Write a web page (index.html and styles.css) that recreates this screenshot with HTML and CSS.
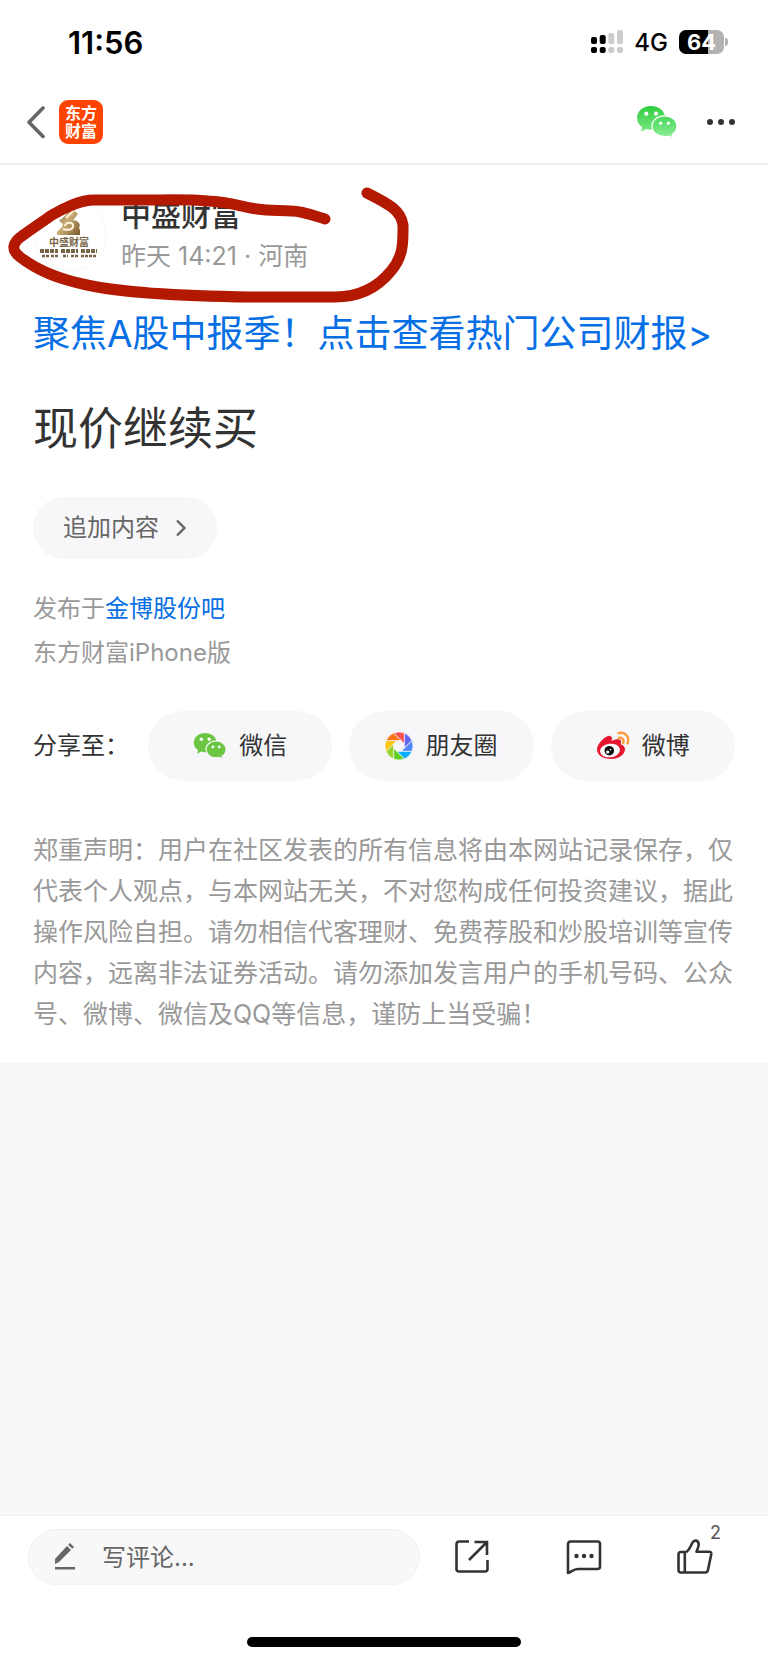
FILE: index.html
```html
<!DOCTYPE html>
<html lang="zh-CN">
<head>
<meta charset="utf-8">
<meta name="viewport" content="width=device-width, initial-scale=1">
<title>现价继续买</title>
<link rel="stylesheet" href="styles.css">
</head>
<body>
<div class="page">
  <div class="status">
    <time class="clock">11:56</time>
    <div class="status-right">
      <svg width="32" height="24" viewBox="0 0 32 24" aria-hidden="true">
        <g fill="#000"><rect x="0" y="7" width="6" height="7" rx="2"/><rect x="8.700" y="5" width="6" height="9" rx="2"/><rect x="0" y="17" width="6" height="6" rx="2"/><rect x="8.700" y="17" width="6" height="6" rx="2"/></g>
        <g fill="#ccc"><rect x="17.300" y="3" width="6" height="11" rx="2"/><rect x="26" y="0" width="6" height="14" rx="2"/><rect x="17.300" y="17" width="6" height="6" rx="2"/><rect x="26" y="17" width="6" height="6" rx="2"/></g>
      </svg>
      <span class="network">4G</span>
      <span class="battery"><span class="battery-level">64</span></span>
    </div>
  </div>

  <header class="nav">
    <button class="icon-btn back" aria-label="返回">
      <svg width="20" height="34" viewBox="0 0 20 34" fill="none" stroke="#666" stroke-width="3.600" stroke-linecap="round" stroke-linejoin="round"><path d="M17 3L3 17.200L17 31.500"/></svg>
    </button>
    <a class="logo" href="#"><span>东方</span><span>财富</span></a>
    <button class="icon-btn wechat" aria-label="分享到微信">
      <svg width="42" height="34" viewBox="0 0 42 34">
        <defs><linearGradient id="wx" x1="0" y1="0" x2="0" y2="34" gradientUnits="userSpaceOnUse"><stop offset="0" stop-color="#2bcb3b"/><stop offset="1" stop-color="#8ff09a"/></linearGradient></defs>
        <path fill="url(#wx)" d="M15 1C7 1 1 6.300 1 13c0 4 2 7 5.200 9.200L5 26.500l5.200-2.600c1.600.5 3.300.7 5 .7 8 0 14-5.200 14-11.700S23 1 15 1z"/>
        <path fill="url(#wx)" stroke="#fff" stroke-width="1.200" d="M28.500 10.800c-7 0-12.500 4.600-12.500 10.400s5.500 10.400 12.500 10.400c1.600 0 3.100-.2 4.500-.6l4.200 2.300-1.100-3.800c3-2 4.800-4.900 4.800-8.300 0-5.800-5.400-10.400-12.400-10.400z"/>
        <g fill="#fff"><circle cx="10.300" cy="8.700" r="2.100"/><circle cx="20" cy="8.700" r="2.100"/><circle cx="24.600" cy="18.200" r="1.600"/><circle cx="32.400" cy="18.200" r="1.600"/></g>
      </svg>
    </button>
    <button class="icon-btn" aria-label="更多">
      <svg width="30" height="8" viewBox="0 0 30 8" fill="#333"><circle cx="4" cy="4" r="3"/><circle cx="15" cy="4" r="3"/><circle cx="26" cy="4" r="3"/></svg>
    </button>
  </header>

  <main class="post">
    <section class="author">
      <svg class="avatar" width="74" height="74" viewBox="0 0 74 74" role="img" aria-label="头像">
        <defs><linearGradient id="gold" x1="0" y1="0" x2="1" y2="1"><stop offset="0" stop-color="#6e5020"/><stop offset=".5" stop-color="#c9ac78"/><stop offset="1" stop-color="#7b5b2b"/></linearGradient></defs>
        <circle cx="37" cy="37" r="36" fill="#fff" stroke="#f7f7f7"/>
        <path d="M26 10c8-7 18-7 20 0l-5 2 4 4-5 6c6 1 8 4 6 8l1 2v5H24v-3l4-4c2-2 2-3 1-5l-3-2 8-7-4-3-6 3z" fill="url(#gold)"/>
        <path d="M30 31c6 2 11 0 10-4s-8-2-8 1M41 12l-8 8M30 12l7-3" fill="none" stroke="#fff2d8" stroke-width="2"/>
        <text class="avatar-name" x="36" y="48" text-anchor="middle">中盛财富</text>
        <g fill="none" stroke="#786547"><path d="M7 53h18M28 53h17M48 53h16" stroke-width="4" stroke-dasharray="4 1"/><path d="M9 58h7M18 58h8M30 58h5M38 58h7M48 58h15" stroke-width="2.500" stroke-dasharray="3 1"/></g>
      </svg>
      <div class="author-text">
        <strong class="author-name">中盛财富</strong>
        <span class="meta">昨天 14:21 · 河南</span>
      </div>
      <svg class="scribble" width="420" height="120" viewBox="0 0 420 120" fill="none" stroke="#b31900" stroke-width="11" stroke-linecap="round" stroke-linejoin="round" aria-hidden="true">
        <path d="M325 32C312 28 301 24 292 24C279 23 270 24 257 22C239 19 229 15 208 14C187 12 165 13 146 13H94C80 13 66 20 52 28C42 35 30 43 22 49C12 56 11 63 20 70C38 84 58 92 87 98C119 105 176 109 251 110H335C360 110 378 100 391 84C404 69 403 54 403 38C401 24 391 18 367 6"/>
      </svg>
    </section>

    <a class="promo" href="#">聚焦A股中报季！点击查看热门公司财报&gt;</a>
    <h1 class="title">现价继续买</h1>
    <button class="append">追加内容
      <svg width="12" height="18" viewBox="0 0 12 18" fill="none" stroke="#666" stroke-width="2.400"><path d="M2 1.500L9.500 9L2 16.500"/></svg>
    </button>
    <div class="source">
      <p>发布于<a href="#">金博股份吧</a></p>
      <p>东方财富iPhone版</p>
    </div>

    <section class="share">
      <span class="share-label">分享至：</span>
      <button class="share-btn">
        <svg width="34" height="30" viewBox="0 0 42 34" fill="#6cc644">
          <path d="M15 1C7 1 1 6.300 1 13c0 4 2 7 5.200 9.200L5 26.500l5.200-2.600c1.600.5 3.300.7 5 .7 8 0 14-5.200 14-11.700S23 1 15 1z"/>
          <path stroke="#f7f7fa" stroke-width="1.500" d="M28.500 10.800c-7 0-12.500 4.600-12.500 10.400s5.500 10.400 12.500 10.400c1.600 0 3.100-.2 4.500-.6l4.200 2.300-1.100-3.800c3-2 4.800-4.900 4.800-8.300 0-5.800-5.400-10.400-12.400-10.400z"/>
          <g fill="#fff"><circle cx="10.300" cy="8.700" r="2.100"/><circle cx="20" cy="8.700" r="2.100"/><circle cx="24.600" cy="18.200" r="1.700"/><circle cx="32.400" cy="18.200" r="1.700"/></g>
        </svg>
        微信
      </button>
      <button class="share-btn">
        <svg width="28" height="28" viewBox="-14 -14 28 28" stroke="#f7f7fa" stroke-width=".7">
          <path fill="#fa5452" d="M-5.400-12.900A14 14 0 0 1 5.400-12.900V-2.200z"/>
          <path fill="#6468f0" d="M5.400-12.900A14 14 0 0 1 12.900-5.400L5.400 2.200z"/>
          <path fill="#5087f5" d="M12.900-5.400A14 14 0 0 1 12.900 5.400H2.200z"/>
          <path fill="#07adff" d="M12.900 5.400A14 14 0 0 1 5.400 12.900L-2.200 5.400z"/>
          <path fill="#60d020" d="M5.400 12.900A14 14 0 0 1-5.400 12.900V2.200z"/>
          <path fill="#97d327" d="M-5.400 12.900A14 14 0 0 1-12.900 5.400L-5.400-2.200z"/>
          <path fill="#fdc60a" d="M-12.900 5.400A14 14 0 0 1-12.900-5.400H-2.200z"/>
          <path fill="#ff7414" d="M-12.900-5.400A14 14 0 0 1-5.400-12.900L2.200-5.400z"/>
        </svg>
        朋友圈
      </button>
      <button class="share-btn">
        <svg width="34" height="30" viewBox="0 0 34 30">
          <path fill="#e6162d" d="M14 5c3 1 2 3 1.500 5 4-2 9-2.500 9.500 0 .4 1.500-.5 2.500-.2 3.200 2 .8 4.200 2.300 4.200 5 0 5-6 9.800-14 9.800S1 24 1 18.500C1 13 10 3.500 14 5z"/>
          <ellipse cx="14" cy="19.500" rx="10" ry="6.800" fill="#fff" transform="rotate(-7 14 19.500)"/>
          <circle cx="13.300" cy="19.700" r="4.800" fill="#111"/><circle cx="11.700" cy="21" r="1.600" fill="#fff"/><circle cx="14.500" cy="18.700" r=".8" fill="#fff"/>
          <path d="M22.500 2.200C29 0 34 6 31.500 12.500M22.800 7C26 6 28.500 9 27.200 12" fill="none" stroke="#ff9a35" stroke-width="2.400" stroke-linecap="round"/>
        </svg>
        微博
      </button>
    </section>

    <p class="notice">郑重声明：用户在社区发表的所有信息将由本网站记录保存，仅代表个人观点，与本网站无关，不对您构成任何投资建议，据此操作风险自担。请勿相信代客理财、免费荐股和炒股培训等宣传内容，远离非法证券活动。请勿添加发言用户的手机号码、公众号、微博、微信及QQ等信息，谨防上当受骗！</p>
  </main>

  <footer class="toolbar">
    <div class="actions">
      <label class="comment">
        <svg width="22" height="30" viewBox="0 0 22 30" fill="#666" aria-label="写评论"><path d="M1 17L13 4l4 4L5 20l-4 2z"/><path d="M14.200 2.800l1.800-1.800 4 4-1.800 1.800z"/><rect x="1" y="25" width="20" height="2.500"/></svg>
        <input type="text" placeholder="写评论...">
      </label>
      <div class="tools">
        <button class="icon-btn" aria-label="转发">
          <svg width="36" height="36" viewBox="0 0 36 36" fill="none" stroke="#333" stroke-width="2.600"><path d="M15 2.500H5a2.500 2.500 0 0 0-2.500 2.500v25A2.500 2.500 0 0 0 5 32.500h26a2.500 2.500 0 0 0 2.500-2.500V21M20.500 3h12.500v13M32.500 3.500L15 21"/></svg>
        </button>
        <button class="icon-btn" aria-label="评论">
          <svg width="36" height="36" viewBox="0 0 36 36" fill="none" stroke="#333" stroke-width="2.600" stroke-linejoin="round"><path d="M2 34V5a2.500 2.500 0 0 1 2.500-2.500h27A2.500 2.500 0 0 1 34 5v22.500a2.500 2.500 0 0 1-2.500 2.500H12C7 30 5 33.500 2 34z"/><g fill="#333" stroke="none"><circle cx="10.500" cy="17" r="2.200"/><circle cx="18" cy="17" r="2.200"/><circle cx="25.500" cy="17" r="2.200"/></g></svg>
        </button>
        <button class="icon-btn like" aria-label="点赞 2">
          <svg width="36" height="36" viewBox="0 0 36 36" fill="none" stroke="#333" stroke-width="2.600" stroke-linejoin="round"><path d="M9.500 13H4A2.500 2.500 0 0 0 1.500 15.500v15.500A2.500 2.500 0 0 0 4 33.500h24a3 3 0 0 0 2.900-2.300L34.300 15a2 2 0 0 0-2-2.300H19.500C21 9 22.300 6.500 21.500 4c-.8-3-4.500-3.300-6-.3C13.500 7 13 10 9.500 13M7.800 13v20"/></svg>
          <span class="badge">2</span>
        </button>
      </div>
    </div>
    <div class="home-indicator"></div>
  </footer>
</div>
</body>
</html>
```

FILE: styles.css
```css
* { box-sizing: border-box; }

body {
  margin: 0;
  font-family: Inter, "Noto Sans CJK SC", sans-serif;
  font-size: 24px;
  color: #333;
  background: #f7f8fa;
}

button, input { font: inherit; color: inherit; border: 0; padding: 0; background: none; }
button { line-height: 28px; }
a { color: #076fe5; text-decoration: none; }
p, h1 { margin: 0; }
svg { display: block; flex: none; }

.page { min-height: 100vh; display: flex; flex-direction: column; }

.status {
  display: flex;
  align-items: center;
  justify-content: space-between;
  height: 84px;
  padding: 0 40px 0 68px;
  background: #fff;
  color: #000;
}
.clock { font-size: 31px; font-weight: 600; }
.status-right { display: flex; align-items: center; gap: 11px; }
.network { font-size: 24px; font-weight: 500; }
.battery {
  position: relative;
  width: 45px;
  height: 24px;
  margin-right: 4px;
  border-radius: 7px;
  background: linear-gradient(90deg, #000 64%, #b2b2b2 64%);
}
.battery::after {
  content: "";
  position: absolute;
  right: -4px;
  top: 8px;
  width: 3px;
  height: 8px;
  border-radius: 0 3px 3px 0;
  background: #b2b2b2;
}
.battery-level { display: block; text-align: center; font-size: 22px; line-height: 24px; font-weight: 700; color: #fff; }

.nav {
  display: flex;
  align-items: center;
  height: 81px;
  padding: 0 32px 3px 26px;
  background: #fff;
  border-bottom: 2px solid #ececec;
}
.icon-btn { display: flex; cursor: pointer; }
.logo {
  display: flex;
  flex-direction: column;
  align-items: center;
  justify-content: center;
  width: 44px;
  height: 44px;
  margin-left: 13px;
  border-radius: 9px;
  background: #ff4400;
  color: #fff;
  font-size: 16px;
  line-height: 18px;
  font-weight: 700;
}
.wechat { margin-left: auto; margin-right: 28px; }

.post { padding: 30px 33px 28px; background: #fff; }

.author { position: relative; display: flex; align-items: center; height: 80px; gap: 14px; }
.author-text { display: flex; flex-direction: column; }
.author-name { font-size: 30px; line-height: 42px; font-weight: 500; }
.meta { font-size: 25px; line-height: 40px; color: #999; }
.avatar-name { font-size: 10px; font-weight: 700; fill: #786547; }
.scribble { position: absolute; left: -33px; top: -8px; }

.promo { display: block; margin-top: 33px; font-size: 37px; line-height: 52px; white-space: nowrap; }
.title { margin-top: 37px; font-size: 45px; line-height: 64px; font-weight: 400; }

.append {
  display: flex;
  align-items: center;
  gap: 16px;
  height: 62px;
  margin-top: 36px;
  padding: 0 30px;
  border-radius: 31px;
  background: #f7f7fa;
  color: #666;
}

.source { margin-top: 28px; line-height: 44px; color: #999; }

.share { display: flex; align-items: center; gap: 17px; margin-top: 36px; }
.share-label { width: 98px; line-height: 28px; white-space: nowrap; }
.share-btn {
  flex: 1;
  display: flex;
  align-items: center;
  justify-content: center;
  gap: 12px;
  height: 70px;
  border-radius: 35px;
  background: #f7f7fa;
}

.notice { margin-top: 49px; font-size: 25px; line-height: 41px; color: #999; }

.toolbar { margin-top: auto; padding: 13px 28px 16px; background: #fff; border-top: 1px solid #f0f0f0; }
.actions { display: grid; grid-template-columns: 392fr 320fr; align-items: center; }
.comment {
  min-width: 0;
  display: flex;
  align-items: center;
  gap: 26px;
  height: 56px;
  padding: 0 25px;
  border: 1px solid #f1f1f1;
  border-radius: 28px;
  background: #f8f8f8;
}
.comment input { flex: 1; min-width: 0; height: 28px; outline: 0; }
.comment input::placeholder { color: #666; opacity: 1; }
.tools { display: flex; justify-content: space-between; padding: 0 27px 0 34px; }
.like { position: relative; }
.badge { position: absolute; left: 33px; top: -16px; font-size: 18px; line-height: 20px; color: #555; }
.home-indicator { width: 274px; height: 10px; margin: 52px auto 0; border-radius: 5px; background: #000; }
```
